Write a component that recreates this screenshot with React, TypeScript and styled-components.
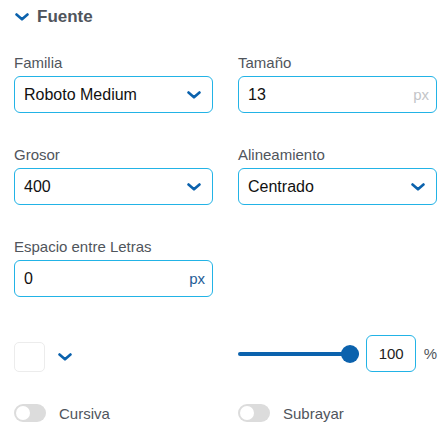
import styled, { createGlobalStyle } from 'styled-components';

const GlobalStyle = createGlobalStyle`
  body {
    margin: 0;
    background: #fff;
    font-family: 'Liberation Sans', Arial, sans-serif;
  }
`;

const BLUE = '#0b62ad';
const BORDER = '#22b3e6';

const Panel = styled.div`
  width: 444px;
  padding: 7px 7px 0 14px;
  box-sizing: border-box;
  display: flex;
  flex-direction: column;
`;

const Header = styled.div`
  display: flex;
  align-items: center;
  gap: 8px;
  height: 20px;
  padding-left: 1px;
  margin-bottom: 27px;
`;

const Title = styled.span`
  font-size: 17px;
  font-weight: 700;
  color: #50555c;
  line-height: 20px;
`;

const Grid = styled.div`
  display: grid;
  grid-template-columns: 199px 199px;
  column-gap: 25px;
  row-gap: 33px;
`;

const Field = styled.div`
  display: flex;
  flex-direction: column;
  gap: 5px;
`;

const Label = styled.label`
  font-size: 15px;
  line-height: 17px;
  color: #50555c;
`;

const Box = styled.div`
  height: 37px;
  box-sizing: border-box;
  border: 1px solid ${BORDER};
  border-radius: 6px;
  display: flex;
  align-items: center;
  justify-content: space-between;
  padding: 0 11px 0 9px;
`;

const Value = styled.span`
  font-size: 16px;
  color: #111;
`;

const Unit = styled.span<{ $muted?: boolean }>`
  font-size: 15px;
  color: ${(p) => (p.$muted ? '#c3c5c8' : '#1f5d96')};
  margin-right: -4px;
`;

const ControlsRow = styled.div`
  display: grid;
  grid-template-columns: 199px 199px;
  column-gap: 25px;
  margin-top: 38px;
  height: 37px;
  flex-shrink: 0;
`;

const ColorPick = styled.div`
  display: flex;
  align-items: flex-end;
  gap: 13px;
`;

const Swatch = styled.div`
  width: 31px;
  height: 30px;
  box-sizing: border-box;
  border: 1px solid #ececec;
  border-radius: 5px;
  background: #fff;
`;

const ChevronSlot = styled.div`
  height: 30px;
  display: flex;
  align-items: center;
`;

const OpacityGroup = styled.div`
  display: flex;
  align-items: center;
`;

const Track = styled.div`
  position: relative;
  width: 121px;
  height: 4px;
  border-radius: 2px;
  background: ${BLUE};
  margin-right: 7px;
`;

const Thumb = styled.div`
  position: absolute;
  right: 0;
  top: -7px;
  width: 18px;
  height: 18px;
  border-radius: 50%;
  background: ${BLUE};
`;

const NumberBox = styled.div`
  width: 50px;
  height: 37px;
  box-sizing: border-box;
  border: 1px solid ${BORDER};
  border-radius: 6px;
  display: flex;
  align-items: center;
  justify-content: flex-end;
  padding-right: 11px;
  font-size: 15px;
  color: #222;
`;

const Percent = styled.span`
  margin-left: 8px;
  font-size: 15px;
  color: #50555c;
`;

const ToggleRow = styled.div`
  display: grid;
  grid-template-columns: 199px 199px;
  column-gap: 25px;
  margin-top: 32px;
  height: 18px;
`;

const ToggleItem = styled.div`
  display: flex;
  align-items: center;
  gap: 13px;
`;

const Switch = styled.div`
  position: relative;
  width: 32px;
  height: 18px;
  border-radius: 9px;
  background: #dcdcdc;
`;

const Knob = styled.div`
  position: absolute;
  left: 2px;
  top: 2px;
  width: 14px;
  height: 14px;
  border-radius: 50%;
  background: #fff;
`;

const ToggleLabel = styled.span`
  font-size: 15px;
  color: #50555c;
`;

const Chevron = ({ w = 14 }: { w?: number }) => (
  <svg width={w} height={w / 2 + 1} viewBox="0 0 14 8" fill="none">
    <path d="M1.5 1.5 L7 6.3 L12.5 1.5" stroke={BLUE} strokeWidth="2.6" strokeLinecap="round" strokeLinejoin="round" />
  </svg>
);

const Select = ({ value }: { value: string }) => (
  <Box>
    <Value>{value}</Value>
    <Chevron />
  </Box>
);

const Input = ({ value, muted }: { value: string; muted?: boolean }) => (
  <Box>
    <Value>{value}</Value>
    <Unit $muted={muted}>px</Unit>
  </Box>
);

const Toggle = ({ label }: { label: string }) => (
  <ToggleItem>
    <Switch>
      <Knob />
    </Switch>
    <ToggleLabel>{label}</ToggleLabel>
  </ToggleItem>
);

export default function App() {
  return (
    <>
      <GlobalStyle />
      <Panel>
        <Header>
          <Chevron />
          <Title>Fuente</Title>
        </Header>
        <Grid>
          <Field>
            <Label>Familia</Label>
            <Select value="Roboto Medium" />
          </Field>
          <Field>
            <Label>Tamaño</Label>
            <Input value="13" muted />
          </Field>
          <Field>
            <Label>Grosor</Label>
            <Select value="400" />
          </Field>
          <Field>
            <Label>Alineamiento</Label>
            <Select value="Centrado" />
          </Field>
          <Field>
            <Label>Espacio entre Letras</Label>
            <Input value="0" />
          </Field>
        </Grid>
        <ControlsRow>
          <ColorPick>
            <Swatch />
            <ChevronSlot>
              <Chevron />
            </ChevronSlot>
          </ColorPick>
          <OpacityGroup>
            <Track>
              <Thumb />
            </Track>
            <NumberBox>100</NumberBox>
            <Percent>%</Percent>
          </OpacityGroup>
        </ControlsRow>
        <ToggleRow>
          <Toggle label="Cursiva" />
          <Toggle label="Subrayar" />
        </ToggleRow>
      </Panel>
    </>
  );
}
